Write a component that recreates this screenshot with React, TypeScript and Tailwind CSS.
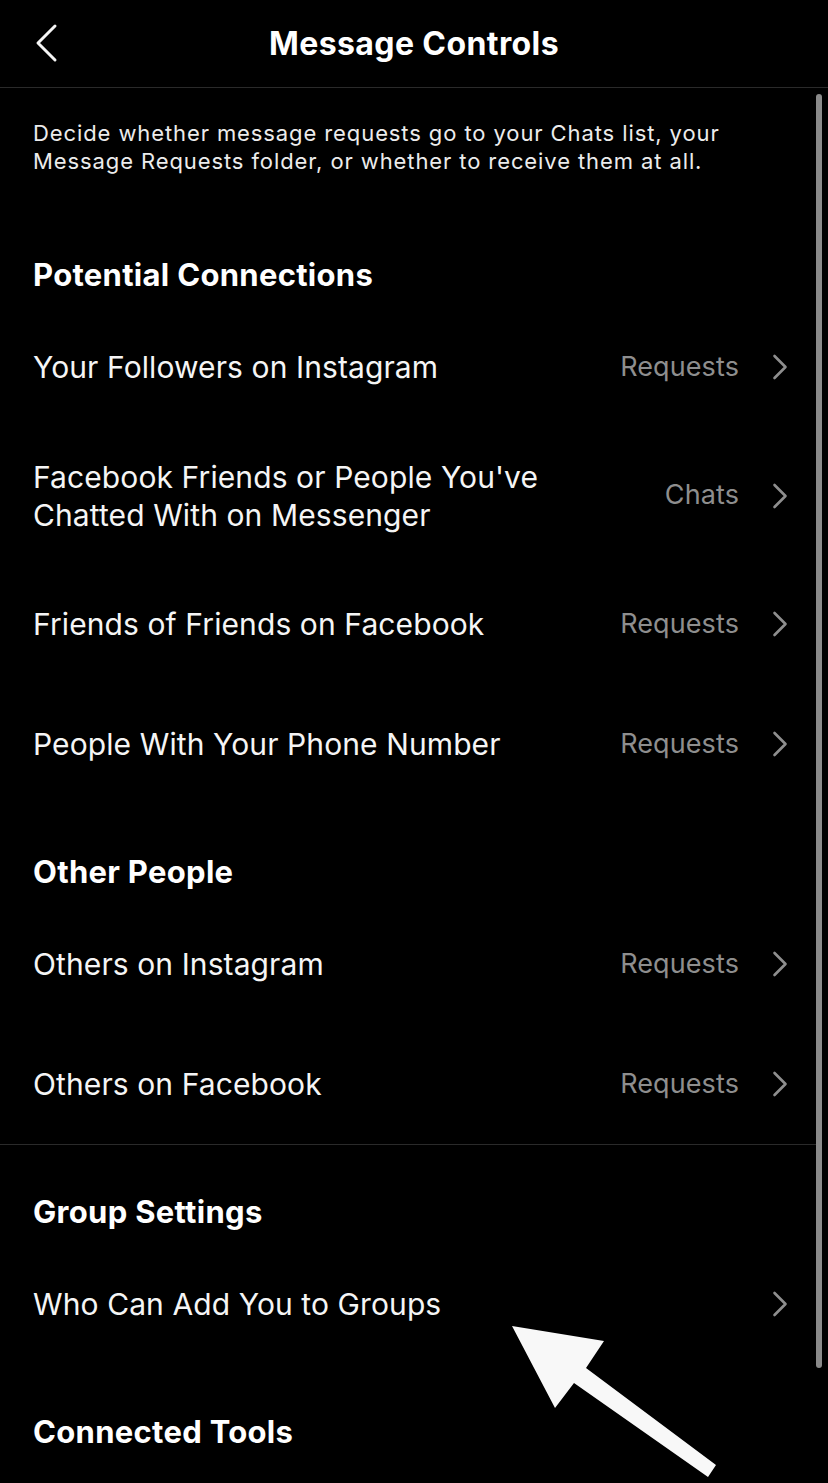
import React from "react";

const Chevron = () => (
  <svg width="16" height="26" viewBox="0 0 16 26" className="shrink-0">
    <path d="M2.5 2 L13.5 13 L2.5 24" fill="none" stroke="#8e8e8e" strokeWidth="2.6" strokeLinecap="round" strokeLinejoin="round" />
  </svg>
);

type RowProps = { label: React.ReactNode; value?: string; h: string };

const Row = ({ label, value, h }: RowProps) => (
  <div className={`flex items-center pl-[33px] pr-[40px] ${h}`}>
    <div className="flex-1 text-[30px] leading-[38px] text-[#f5f5f5] tracking-[0.1px]">{label}</div>
    {value && <div className="text-[27px] text-[#8e8e8e] mr-[33px] tracking-[0.1px]">{value}</div>}
    <Chevron />
  </div>
);

const SectionHeader = ({ title, pt }: { title: string; pt: string }) => (
  <div className={`pl-[33px] ${pt} pb-[12px]`}>
    <div className="text-[31px] leading-[40px] font-bold text-white tracking-[0.3px]">{title}</div>
  </div>
);

export default function App() {
  return (
    <div
      className="relative w-[828px] h-[1483px] overflow-hidden bg-black text-white"
      style={{ fontFamily: "Inter, 'Noto Sans', sans-serif" }}
    >
      <header className="relative flex items-center justify-center h-[88px] border-b border-[#2a2a2a]">
        <svg width="30" height="40" viewBox="0 0 30 40" className="absolute left-[32px] top-[23px]">
          <path d="M23 3 L6 20 L23 37" fill="none" stroke="#f5f5f5" strokeWidth="3" strokeLinecap="round" strokeLinejoin="round" />
        </svg>
        <h1 className="text-[32px] font-bold tracking-[0.4px] text-white">Message Controls</h1>
      </header>

      <p className="pl-[33px] pr-[40px] pt-[31px] text-[22px] leading-[28px] text-[#ececec] tracking-[0.9px] whitespace-nowrap">
        Decide whether message requests go to your Chats list, your
        <br />
        Message Requests folder, or whether to receive them at all.
      </p>

      <SectionHeader title="Potential Connections" pt="pt-[80px]" />
      <Row h="h-[120px]" label="Your Followers on Instagram" value="Requests" />
      <Row
        h="h-[137px]"
        label={
          <>
            Facebook Friends or People You've
            <br />
            Chatted With on Messenger
          </>
        }
        value="Chats"
      />
      <Row h="h-[120px]" label="Friends of Friends on Facebook" value="Requests" />
      <Row h="h-[120px]" label="People With Your Phone Number" value="Requests" />

      <SectionHeader title="Other People" pt="pt-[48px]" />
      <Row h="h-[120px]" label="Others on Instagram" value="Requests" />
      <Row h="h-[120px]" label="Others on Facebook" value="Requests" />

      <div className="border-t border-[#2a2a2a] mr-[12px]" />

      <SectionHeader title="Group Settings" pt="pt-[47px]" />
      <Row h="h-[120px]" label="Who Can Add You to Groups" />

      <SectionHeader title="Connected Tools" pt="pt-[48px]" />

      {/* scrollbar */}
      <div className="absolute left-[816px] top-[94px] w-[6px] h-[1274px] rounded-full bg-[#8a8a8a]" />

      {/* annotation arrow */}
      <svg className="absolute left-0 top-0 pointer-events-none" width="828" height="1483" viewBox="0 0 828 1483">
        <polygon
          points="512,1326 604,1341 586,1368 716,1465 708,1477 574,1383 555,1408"
          fill="#f8f8f8"
        />
      </svg>
    </div>
  );
}
